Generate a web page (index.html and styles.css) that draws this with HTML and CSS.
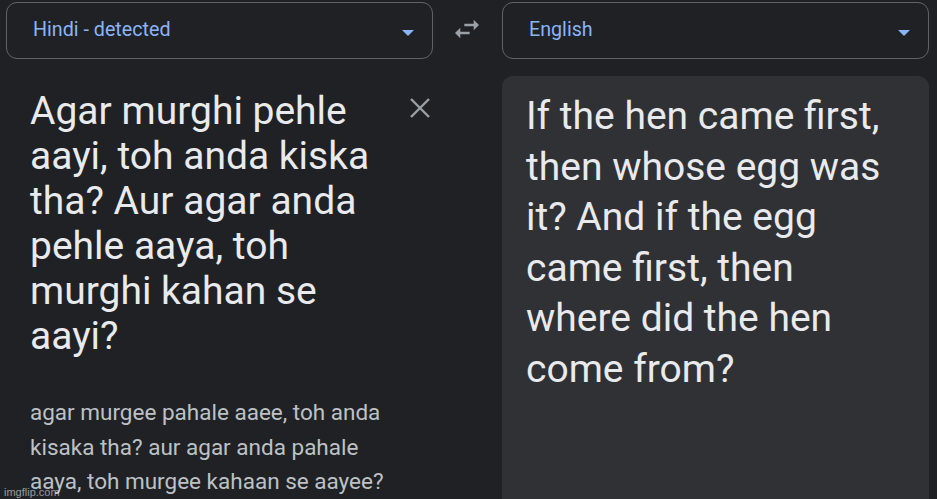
FILE: index.html
```html
<!DOCTYPE html>
<html>
<head>
<meta charset="utf-8">
<link rel="stylesheet" href="styles.css">
</head>
<body>
<div class="page">
  <div class="toolbar">
    <div class="lang-select">
      <span class="lang-label">Hindi - detected</span>
      <span class="caret"></span>
    </div>
    <div class="swap">
      <svg width="32" height="32" viewBox="0 0 24 24"><path fill="#9aa0a6" d="M6.99 11L3 15l3.99 4v-3H14v-2H6.99v-3zM21 9l-3.99-4v3H10v2h7.01v3L21 9z"/></svg>
    </div>
    <div class="lang-select">
      <span class="lang-label">English</span>
      <span class="caret"></span>
    </div>
  </div>
  <div class="panels">
    <div class="source">
      <div class="source-row">
        <p class="source-text">Agar murghi pehle<br>aayi, toh anda kiska<br>tha? Aur agar anda<br>pehle aaya, toh<br>murghi kahan se<br>aayi?</p>
        <div class="close">
          <svg width="22" height="22" viewBox="0 0 22 22"><path d="M2 2L20 20M20 2L2 20" stroke="#9aa0a6" stroke-width="2.4" fill="none"/></svg>
        </div>
      </div>
      <p class="translit">agar murgee pahale aaee, toh anda<br>kisaka tha? aur agar anda pahale<br>aaya, toh murgee kahaan se aayee?</p>
    </div>
    <div class="target">
      <p class="target-text">If the hen came first,<br>then whose egg was<br>it? And if the egg<br>came first, then<br>where did the hen<br>come from?</p>
    </div>
  </div>
  <div class="watermark">imgflip.com</div>
</div>
</body>
</html>
```
FILE: styles.css
```css
html, body {
  margin: 0;
  padding: 0;
  background: #202124;
  overflow: hidden;
}
body {
  font-family: Roboto, "Noto Sans", Arial, sans-serif;
  width: 937px;
  height: 499px;
}
.page {
  position: relative;
  height: 499px;
  padding: 2px 8px 0 6px;
  box-sizing: border-box;
  overflow: hidden;
}
.toolbar {
  display: flex;
  align-items: center;
  height: 57px;
}
.lang-select {
  width: 427px;
  height: 57px;
  box-sizing: border-box;
  border: 1px solid #5f6368;
  border-radius: 11px;
  display: flex;
  align-items: center;
  justify-content: space-between;
  padding: 0 18px 0 26px;
}
.lang-label {
  color: #8ab4f8;
  font-size: 19.7px;
  margin-top: -2px;
}
.caret {
  width: 0;
  height: 0;
  border-left: 6px solid transparent;
  border-right: 6px solid transparent;
  border-top: 6px solid #8ab4f8;
  margin-top: 4px;
}
.swap {
  width: 69px;
  display: flex;
  justify-content: center;
  align-items: center;
  margin-top: -4px;
  padding-right: 2px;
  box-sizing: border-box;
}
.swap svg { display: block; }
.panels {
  display: flex;
  margin-top: 17px;
}
.source {
  width: 427px;
  padding: 0 0 0 24px;
  box-sizing: border-box;
}
.source-row {
  display: flex;
  justify-content: space-between;
}
.source-text {
  margin: 13px 0 0 0;
  color: #e8eaed;
  font-size: 39px;
  line-height: 45px;
}
.close {
  margin: 21px 2px 0 0;
  width: 22px;
  height: 22px;
}
.close svg { display: block; }
.translit {
  margin: 36px 0 0 0;
  color: #bdc1c6;
  font-size: 22.5px;
  line-height: 34.5px;
}
.target {
  margin-left: 69px;
  width: 427px;
  height: 440px;
  background: #303134;
  border-radius: 11px;
  padding: 15px 24px 0 24px;
  box-sizing: border-box;
}
.target-text {
  margin: 0;
  color: #e8eaed;
  font-size: 39px;
  line-height: 50.5px;
}
.watermark {
  position: absolute;
  left: 4px;
  bottom: 1px;
  font-size: 11px;
  color: rgba(255, 255, 255, 0.55);
  font-family: "Liberation Sans", Arial, sans-serif;
}
```
